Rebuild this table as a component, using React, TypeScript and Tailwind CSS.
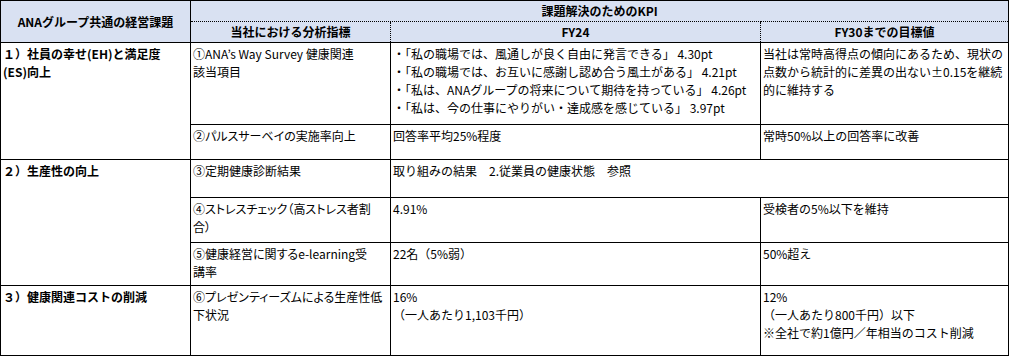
import React from "react";

// ANAグループ 健康経営 KPI 表

const font = "font-['Noto_Sans_CJK_JP','Noto_Sans',sans-serif]";

const cell = "border border-black align-top px-[2px] pt-[2px] leading-[18px] whitespace-nowrap overflow-hidden";
const head = "bg-[#d9e1f2] font-bold text-center align-middle leading-[18px] whitespace-nowrap";

export default function App() {
  return (
    <div className={`bg-white w-[1010px] h-[357px] text-[12px] text-black ${font}`}>
      <table className="table-fixed border-collapse border border-black w-[1008px]">
        <colgroup>
          <col className="w-[190px]" />
          <col className="w-[200px]" />
          <col className="w-[370px]" />
          <col className="w-[248px]" />
        </colgroup>
        <tbody>
          {/* ヘッダー */}
          <tr className="h-[21px]">
            <td rowSpan={2} className={`${head} border border-black`}>
              ANAグループ共通の経営課題
            </td>
            <td colSpan={3} className={`${head} border border-dotted border-black`}>
              課題解決のためのKPI
            </td>
          </tr>
          <tr className="h-[21px]">
            <td className={`${head} border border-dotted border-black`}>当社における分析指標</td>
            <td className={`${head} border border-dotted border-black`}>FY24</td>
            <td className={`${head} border border-dotted border-black`}>FY30までの目標値</td>
          </tr>

          {/* 1) 社員の幸せ */}
          <tr className="h-[82px]">
            <td rowSpan={2} className={`${cell} font-bold px-0`}>
              １）社員の幸せ(EH)と満足度
              <br />
              (ES)向上
            </td>
            <td className={`${cell} [font-feature-settings:'palt']`}>
              ①ANA’s Way Survey 健康関連
              <br />
              該当項目
            </td>
            <td className={cell}>
              ・「私の職場では、風通しが良く自由に発言できる」 4.30pt
              <br />
              ・「私の職場では、お互いに感謝し認め合う風土がある」 4.21pt
              <br />
              ・「私は、ANAグループの将来について期待を持っている」 4.26pt
              <br />
              ・「私は、今の仕事にやりがい・達成感を感じている」 3.97pt
            </td>
            <td className={cell}>
              当社は常時高得点の傾向にあるため、現状の
              <br />
              点数から統計的に差異の出ない±0.15を継続
              <br />
              的に維持する
            </td>
          </tr>
          <tr className="h-[35px]">
            <td className={`${cell} [font-feature-settings:'palt']`}>②パルスサーベイの実施率向上</td>
            <td className={cell}>回答率平均25%程度</td>
            <td className={cell}>常時50%以上の回答率に改善</td>
          </tr>

          {/* 2) 生産性の向上 */}
          <tr className="h-[38px]">
            <td rowSpan={3} className={`${cell} font-bold px-0`}>
              ２）生産性の向上
            </td>
            <td className={`${cell} [font-feature-settings:'palt']`}>③定期健康診断結果</td>
            <td colSpan={2} className={cell}>
              取り組みの結果　2.従業員の健康状態　参照
            </td>
          </tr>
          <tr className="h-[45px]">
            <td className={`${cell} [font-feature-settings:'palt']`}>
              ④ストレスチェック（高ストレス者割
              <br />
              合）
            </td>
            <td className={cell}>4.91%</td>
            <td className={cell}>受検者の5%以下を維持</td>
          </tr>
          <tr className="h-[43px]">
            <td className={`${cell} [font-feature-settings:'palt']`}>
              ⑤健康経営に関するe-learning受
              <br />
              講率
            </td>
            <td className={cell}>22名（5%弱）</td>
            <td className={cell}>50%超え</td>
          </tr>

          {/* 3) 健康関連コスト */}
          <tr className="h-[70px]">
            <td className={`${cell} font-bold px-0`}>３）健康関連コストの削減</td>
            <td className={`${cell} [font-feature-settings:'palt']`}>
              ⑥プレゼンティーズムによる生産性低
              <br />
              下状況
            </td>
            <td className={cell}>
              16%
              <br />
              （一人あたり1,103千円）
            </td>
            <td className={cell}>
              12%
              <br />
              （一人あたり800千円）以下
              <br />
              ※全社で約1億円／年相当のコスト削減
            </td>
          </tr>
        </tbody>
      </table>
    </div>
  );
}
